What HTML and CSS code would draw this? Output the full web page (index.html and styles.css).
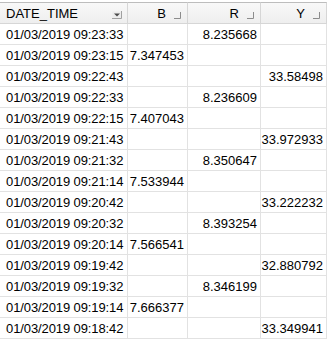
FILE: index.html
```html
<!DOCTYPE html>
<html lang="en">
<head>
<meta charset="utf-8">
<title>Readings</title>
<link rel="stylesheet" href="styles.css">
</head>
<body>
<div class="sheet" role="table">
  <div class="row head" role="row">
    <div class="cell hc first" role="columnheader">
      <span class="label">DATE_TIME</span>
      <span class="drop"><svg width="10" height="8" viewBox="0 0 10 8"><rect x="0.5" y="0.5" width="9" height="7" fill="#ececec" stroke="none"/><path d="M9.5 0V7.5H0" fill="none" stroke="#a0a0a0"/><path d="M2 2.5H8L5 5.5Z" fill="#4a4a4a"/></svg></span>
    </div>
    <div class="cell hc" role="columnheader"><span class="label">B</span><svg class="corner" width="7" height="7" viewBox="0 0 7 7"><path d="M6.5 0V6.5H0" fill="none" stroke="#8c8c8c"/></svg></div>
    <div class="cell hc" role="columnheader"><span class="label">R</span><svg class="corner" width="7" height="7" viewBox="0 0 7 7"><path d="M6.5 0V6.5H0" fill="none" stroke="#8c8c8c"/></svg></div>
    <div class="cell hc" role="columnheader"><span class="label">Y</span><svg class="corner" width="7" height="7" viewBox="0 0 7 7"><path d="M6.5 0V6.5H0" fill="none" stroke="#8c8c8c"/></svg></div>
  </div>
  <div class="row" role="row"><div class="cell date">01/03/2019 09:23:33</div><div class="cell num"></div><div class="cell num">8.235668</div><div class="cell num"></div></div>
  <div class="row" role="row"><div class="cell date">01/03/2019 09:23:15</div><div class="cell num">7.347453</div><div class="cell num"></div><div class="cell num"></div></div>
  <div class="row" role="row"><div class="cell date">01/03/2019 09:22:43</div><div class="cell num"></div><div class="cell num"></div><div class="cell num">33.58498</div></div>
  <div class="row" role="row"><div class="cell date">01/03/2019 09:22:33</div><div class="cell num"></div><div class="cell num">8.236609</div><div class="cell num"></div></div>
  <div class="row" role="row"><div class="cell date">01/03/2019 09:22:15</div><div class="cell num">7.407043</div><div class="cell num"></div><div class="cell num"></div></div>
  <div class="row" role="row"><div class="cell date">01/03/2019 09:21:43</div><div class="cell num"></div><div class="cell num"></div><div class="cell num">33.972933</div></div>
  <div class="row" role="row"><div class="cell date">01/03/2019 09:21:32</div><div class="cell num"></div><div class="cell num">8.350647</div><div class="cell num"></div></div>
  <div class="row" role="row"><div class="cell date">01/03/2019 09:21:14</div><div class="cell num">7.533944</div><div class="cell num"></div><div class="cell num"></div></div>
  <div class="row" role="row"><div class="cell date">01/03/2019 09:20:42</div><div class="cell num"></div><div class="cell num"></div><div class="cell num">33.222232</div></div>
  <div class="row" role="row"><div class="cell date">01/03/2019 09:20:32</div><div class="cell num"></div><div class="cell num">8.393254</div><div class="cell num"></div></div>
  <div class="row" role="row"><div class="cell date">01/03/2019 09:20:14</div><div class="cell num">7.566541</div><div class="cell num"></div><div class="cell num"></div></div>
  <div class="row" role="row"><div class="cell date">01/03/2019 09:19:42</div><div class="cell num"></div><div class="cell num"></div><div class="cell num">32.880792</div></div>
  <div class="row" role="row"><div class="cell date">01/03/2019 09:19:32</div><div class="cell num"></div><div class="cell num">8.346199</div><div class="cell num"></div></div>
  <div class="row" role="row"><div class="cell date">01/03/2019 09:19:14</div><div class="cell num">7.666377</div><div class="cell num"></div><div class="cell num"></div></div>
  <div class="row" role="row"><div class="cell date">01/03/2019 09:18:42</div><div class="cell num"></div><div class="cell num"></div><div class="cell num">33.349941</div></div>
</div>
</body>
</html>
```
FILE: styles.css
```css
html, body {
  margin: 0;
  padding: 0;
  background: #ffffff;
}
body {
  font-family: "Liberation Sans", Arial, sans-serif;
  font-size: 13px;
  color: #000;
}
.sheet {
  padding-top: 2px;
  width: 327px;
}
.row {
  display: grid;
  grid-template-columns: 128px 60px 73px 66px;
  height: 21px;
}
.cell {
  box-sizing: border-box;
  border-right: 1px solid #e2e2e2;
  border-bottom: 1px solid #e2e2e2;
  display: flex;
  align-items: center;
  white-space: nowrap;
  overflow: hidden;
}
.date {
  padding-left: 6px;
  letter-spacing: -0.1px;
}
.num {
  justify-content: flex-end;
  padding-right: 3px;
}
.head {
  height: 22px;
}
.hc {
  background: linear-gradient(#f8f8f8, #eeeeee);
  border-top: 1px solid #bdbdbd;
  border-bottom: 1px solid #d6d6d6;
  border-right-color: #d6d6d6;
  justify-content: flex-end;
  padding-right: 6px;
  gap: 8px;
}
.hc.first {
  justify-content: space-between;
  padding-left: 6px;
  padding-right: 5px;
}
.corner {
  display: block;
  margin-top: 4px;
}
.drop {
  display: flex;
  margin-top: 3px;
}
.drop svg {
  display: block;
}
```
